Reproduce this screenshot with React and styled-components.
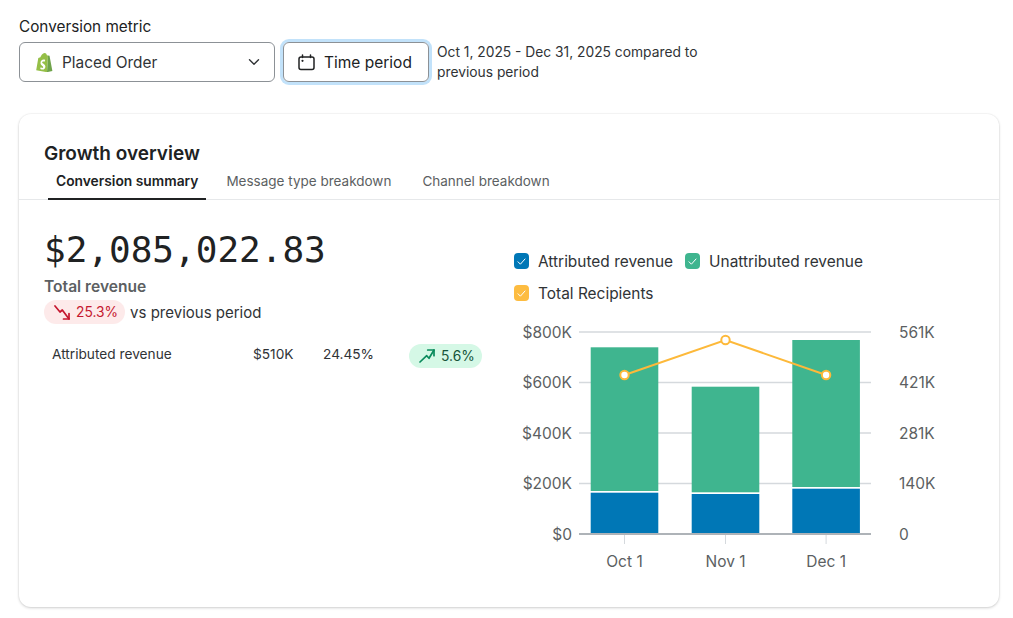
import React from 'react'
import styled, { createGlobalStyle } from 'styled-components'

const GlobalStyle = createGlobalStyle`
  html, body {
    margin: 0;
    padding: 0;
    background: #fff;
    font-family: Inter, "Liberation Sans", sans-serif;
    color: #202223;
  }
`

const Page = styled.div`
  width: 1013px;
  height: 618px;
  box-sizing: border-box;
  padding: 17px 14px 0 19px;
  overflow: hidden;
`

const FieldLabel = styled.div`
  font-size: 15.3px;
  line-height: 20px;
  margin-bottom: 5px;
`

const Controls = styled.div`
  display: flex;
  align-items: flex-start;
  gap: 8px;
`

const Select = styled.div`
  width: 256px;
  height: 40px;
  box-sizing: border-box;
  display: flex;
  align-items: center;
  padding: 0 14px 0 15px;
  border: 1px solid #8c9196;
  border-radius: 6px;
  font-size: 15.4px;
  color: #303336;
`

const SelectText = styled.span`
  flex: 1;
  margin-left: 9px;
`

const TimeButton = styled.div`
  width: 146px;
  height: 40px;
  box-sizing: border-box;
  display: flex;
  align-items: center;
  gap: 9px;
  padding-left: 14px;
  border: 1px solid #8c9196;
  border-radius: 6px;
  box-shadow: 0 0 0 3px #c2e2fa;
  font-size: 15.5px;
  color: #202223;
`

const PeriodNote = styled.div`
  width: 290px;
  font-size: 13.8px;
  line-height: 20px;
  color: #303336;
`

const Card = styled.section`
  width: 980px;
  height: 493px;
  box-sizing: border-box;
  margin-top: 32px;
  border-radius: 12px;
  background: #fff;
  box-shadow: 0 0 0 1px rgba(0, 0, 0, 0.025), 0 1px 3px rgba(0, 0, 0, 0.18);
`

const CardHeader = styled.header`
  padding: 28px 0 0 25px;
`

const Title = styled.h2`
  margin: 0;
  font-size: 19px;
  line-height: 24px;
  font-weight: 600;
`

const Tabs = styled.nav`
  display: flex;
  gap: 4px;
  border-bottom: 1px solid #e6e8ea;
  margin: 0 0 0 -25px;
  padding-left: 29px;
`

const Tab = styled.div`
  padding: 6px ${p => p.$pad}px 8px;
  font-size: ${p => (p.$active ? 13.8 : 13.5)}px;
  line-height: 18px;
  margin-bottom: -1px;
  font-weight: ${p => (p.$active ? 600 : 400)};
  color: ${p => (p.$active ? '#202223' : '#5c5f62')};
  border-bottom: 2px solid ${p => (p.$active ? '#202223' : 'transparent')};
`

const CardBody = styled.div`
  display: flex;
  padding: 25px 0 0 25px;
`

const Summary = styled.div`
  width: 438px;
  flex: none;
`

const BigValue = styled.div`
  font-family: "DejaVu Sans Mono", monospace;
  font-size: 36px;
  line-height: 50px;
  color: #202223;
`

const TotalLabel = styled.div`
  margin-top: 1px;
  font-size: 15.6px;
  line-height: 22px;
  font-weight: 600;
  color: #5c5f62;
`

const ChangeRow = styled.div`
  display: flex;
  align-items: center;
  gap: 5px;
  margin-top: 2px;
  font-size: 15px;
  color: #303336;
`

const Pill = styled.span`
  display: inline-flex;
  align-items: center;
  gap: 6px;
  height: 24px;
  padding: 0 7px 0 8px;
  border-radius: 12px;
  font-size: 13.8px;
  background: ${p => p.$bg};
  color: ${p => p.$fg};
`

const MetricRow = styled.div`
  display: grid;
  grid-template-columns: 201px 70px 86px auto;
  align-items: center;
  margin: 16px 0 0 8px;
  font-size: 13.7px;
  color: #303336;
`

const MetricPill = styled.div`
  justify-self: start;
  margin-top: 4px;
`

const ChartSide = styled.div`
  flex: none;
  width: 440px;
  margin-left: 32px;
  padding-top: 20px;
`

const Legend = styled.div`
  display: flex;
  flex-wrap: wrap;
  gap: 0 12px;
  width: 380px;
`

const LegendItem = styled.div`
  display: flex;
  align-items: center;
  gap: 9px;
  height: 32px;
  font-size: 15.45px;
  color: #303336;
`

const Check = styled.span`
  width: 15px;
  height: 16px;
  border-radius: 4px;
  background: ${p => p.$color};
  display: flex;
  align-items: center;
  justify-content: center;
`

const ChartSvg = styled.svg`
  display: block;
  margin-top: 12px;
  font-family: Inter, "Liberation Sans", sans-serif;
  font-size: 15.5px;
  fill: #5c5f62;
`

const CheckMark = () => (
  <svg width="11" height="11" viewBox="0 0 11 11" fill="none">
    <path d="M2 5.8 4.4 8.2 9 3" stroke="#fff" strokeWidth="1" strokeLinecap="round" strokeLinejoin="round" />
  </svg>
)

const ShopifyIcon = () => (
  <svg width="18" height="20" viewBox="0 0 18 20">
    <path d="M13 3.4 11.9 3.2C11.5 1.7 10.6.8 9.6.9 7.7 1 5.9 3.6 5.4 5.2L3.3 5.9 1.2 18.2 12 20.2Z" fill="#95bf47" />
    <path d="M13 3.4 12 20.2 17.4 18.9 14.5 3.7Z" fill="#6fa34a" />
    <path d="M10.2 7.9 9.6 9.7C8.4 9.2 7.2 9.5 7.2 10.4 7.2 11.5 10.4 11.9 10.4 14.5 10.4 16.6 9 17.7 7.5 17.6 6.3 17.5 5.2 16.9 5.2 16.9L5.7 15.2C5.7 15.2 6.6 15.9 7.4 15.9 8 15.9 8.2 15.4 8.2 15.1 8.2 13.6 5.5 13.5 5.5 10.9 5.5 8.8 7 7.3 8.9 7.4 9.7 7.4 10.2 7.9 10.2 7.9Z" fill="#fff" />
  </svg>
)

const Chevron = () => (
  <svg width="12" height="12" viewBox="0 0 12 12" fill="none">
    <path d="M1.5 3.8 6 8.2 10.5 3.8" stroke="#303336" strokeWidth="1.4" strokeLinecap="round" strokeLinejoin="round" />
  </svg>
)

const CalendarIcon = () => (
  <svg width="17" height="17" viewBox="0 0 17 17" fill="none">
    <rect x="1" y="3" width="15" height="12.4" rx="2" stroke="#202223" strokeWidth="1.5" />
    <path d="M4.5 1v2.5M12.5 1v2.5" stroke="#202223" strokeWidth="1.5" strokeLinecap="round" />
    <circle cx="4.5" cy="6.8" r="1.1" fill="#202223" />
  </svg>
)

const TrendDown = () => (
  <svg width="18" height="16" viewBox="0 0 18 16" fill="none" stroke="#c5172f" strokeWidth="1.7" strokeLinecap="round" strokeLinejoin="round">
    <path d="M3 2 8 8 10.3 6 17 15" />
    <path d="M11.5 15H17V9.5" />
  </svg>
)

const TrendUp = () => (
  <svg width="18" height="16" viewBox="0 0 18 16" fill="none" stroke="#0a8a5c" strokeWidth="1.7" strokeLinecap="round" strokeLinejoin="round">
    <path d="M3 14 9.7 7.7 12 10.3 17 2" />
    <path d="M10.7 2H17V7.7" />
  </svg>
)

const legend = [
  { label: 'Attributed revenue', color: '#0077b6' },
  { label: 'Unattributed revenue', color: '#3fb58f' },
  { label: 'Total Recipients', color: '#fdbc40' },
]

// all chart numbers are in svg space, origin is top left of the plot box
const plot = { left: 65, right: 357, zero: 213, step: 50.5 }
const ticks = [
  ['$0', '0'],
  ['$200K', '140K'],
  ['$400K', '281K'],
  ['$600K', '421K'],
  ['$800K', '561K'],
]
const bars = [
  { label: 'Oct 1', x: 76.7, top: 26.3, split: 170, blue: 171.7, dot: 54 },
  { label: 'Nov 1', x: 177.7, top: 65.7, split: 171.3, blue: 173, dot: 19 },
  { label: 'Dec 1', x: 278.3, top: 19, split: 166, blue: 167.7, dot: 54 },
]

function Chart() {
  const line = bars.map(b => `${b.x + 33.8},${b.dot}`).join(' ')
  return (
    <ChartSvg width="440" height="260" viewBox="0 0 440 260">
      {ticks.map(([left, right], i) => {
        const y = plot.zero - i * plot.step
        return (
          <g key={left}>
            <line
              x1={plot.left}
              x2={plot.right}
              y1={y}
              y2={y}
              stroke={i === 0 ? '#aeb3b8' : '#d5d9dd'}
              strokeWidth={i === 0 ? 2 : 1.3}
            />
            <text x="58" y={y + 5.5} textAnchor="end">{left}</text>
            <text x="385" y={y + 5.5}>{right}</text>
          </g>
        )
      })}
      {bars.map(b => (
        <g key={b.label}>
          <rect x={b.x} y={b.top} width="67.6" height={b.split - b.top} fill="#3fb58f" />
          <rect x={b.x} y={b.blue} width="67.6" height={plot.zero - 1 - b.blue} fill="#0077b6" />
          <line x1={b.x + 33.8} x2={b.x + 33.8} y1={plot.zero + 1} y2={plot.zero + 10} stroke="#d5d9dd" />
          <text x={b.x + 33.8} y="246" textAnchor="middle">{b.label}</text>
        </g>
      ))}
      <polyline points={line} fill="none" stroke="#fdb93a" strokeWidth="2" />
      {bars.map(b => (
        <circle key={b.label} cx={b.x + 33.8} cy={b.dot} r="4.2" fill="#fff" stroke="#fdb93a" strokeWidth="2" />
      ))}
    </ChartSvg>
  )
}

export default function App() {
  return (
    <Page>
      <GlobalStyle />
      <FieldLabel>Conversion metric</FieldLabel>
      <Controls>
        <Select>
          <ShopifyIcon />
          <SelectText>Placed Order</SelectText>
          <Chevron />
        </Select>
        <TimeButton>
          <CalendarIcon />
          Time period
        </TimeButton>
        <PeriodNote>Oct 1, 2025 - Dec 31, 2025 compared to previous period</PeriodNote>
      </Controls>
      <Card>
        <CardHeader>
          <Title>Growth overview</Title>
          <Tabs>
            <Tab $active $pad={8}>Conversion summary</Tab>
            <Tab $pad={16}>Message type breakdown</Tab>
            <Tab $pad={11}>Channel breakdown</Tab>
          </Tabs>
        </CardHeader>
        <CardBody>
          <Summary>
            <BigValue>$2,085,022.83</BigValue>
            <TotalLabel>Total revenue</TotalLabel>
            <ChangeRow>
              <Pill $bg="#fdeaea" $fg="#c5172f">
                <TrendDown />
                25.3%
              </Pill>
              vs previous period
            </ChangeRow>
            <MetricRow>
              <span>Attributed revenue</span>
              <span>$510K</span>
              <span>24.45%</span>
              <MetricPill>
                <Pill $bg="#d5f8e6" $fg="#14543a">
                  <TrendUp />
                  5.6%
                </Pill>
              </MetricPill>
            </MetricRow>
          </Summary>
          <ChartSide>
            <Legend>
              {legend.map(item => (
                <LegendItem key={item.label}>
                  <Check $color={item.color}><CheckMark /></Check>
                  {item.label}
                </LegendItem>
              ))}
            </Legend>
            <Chart />
          </ChartSide>
        </CardBody>
      </Card>
    </Page>
  )
}
